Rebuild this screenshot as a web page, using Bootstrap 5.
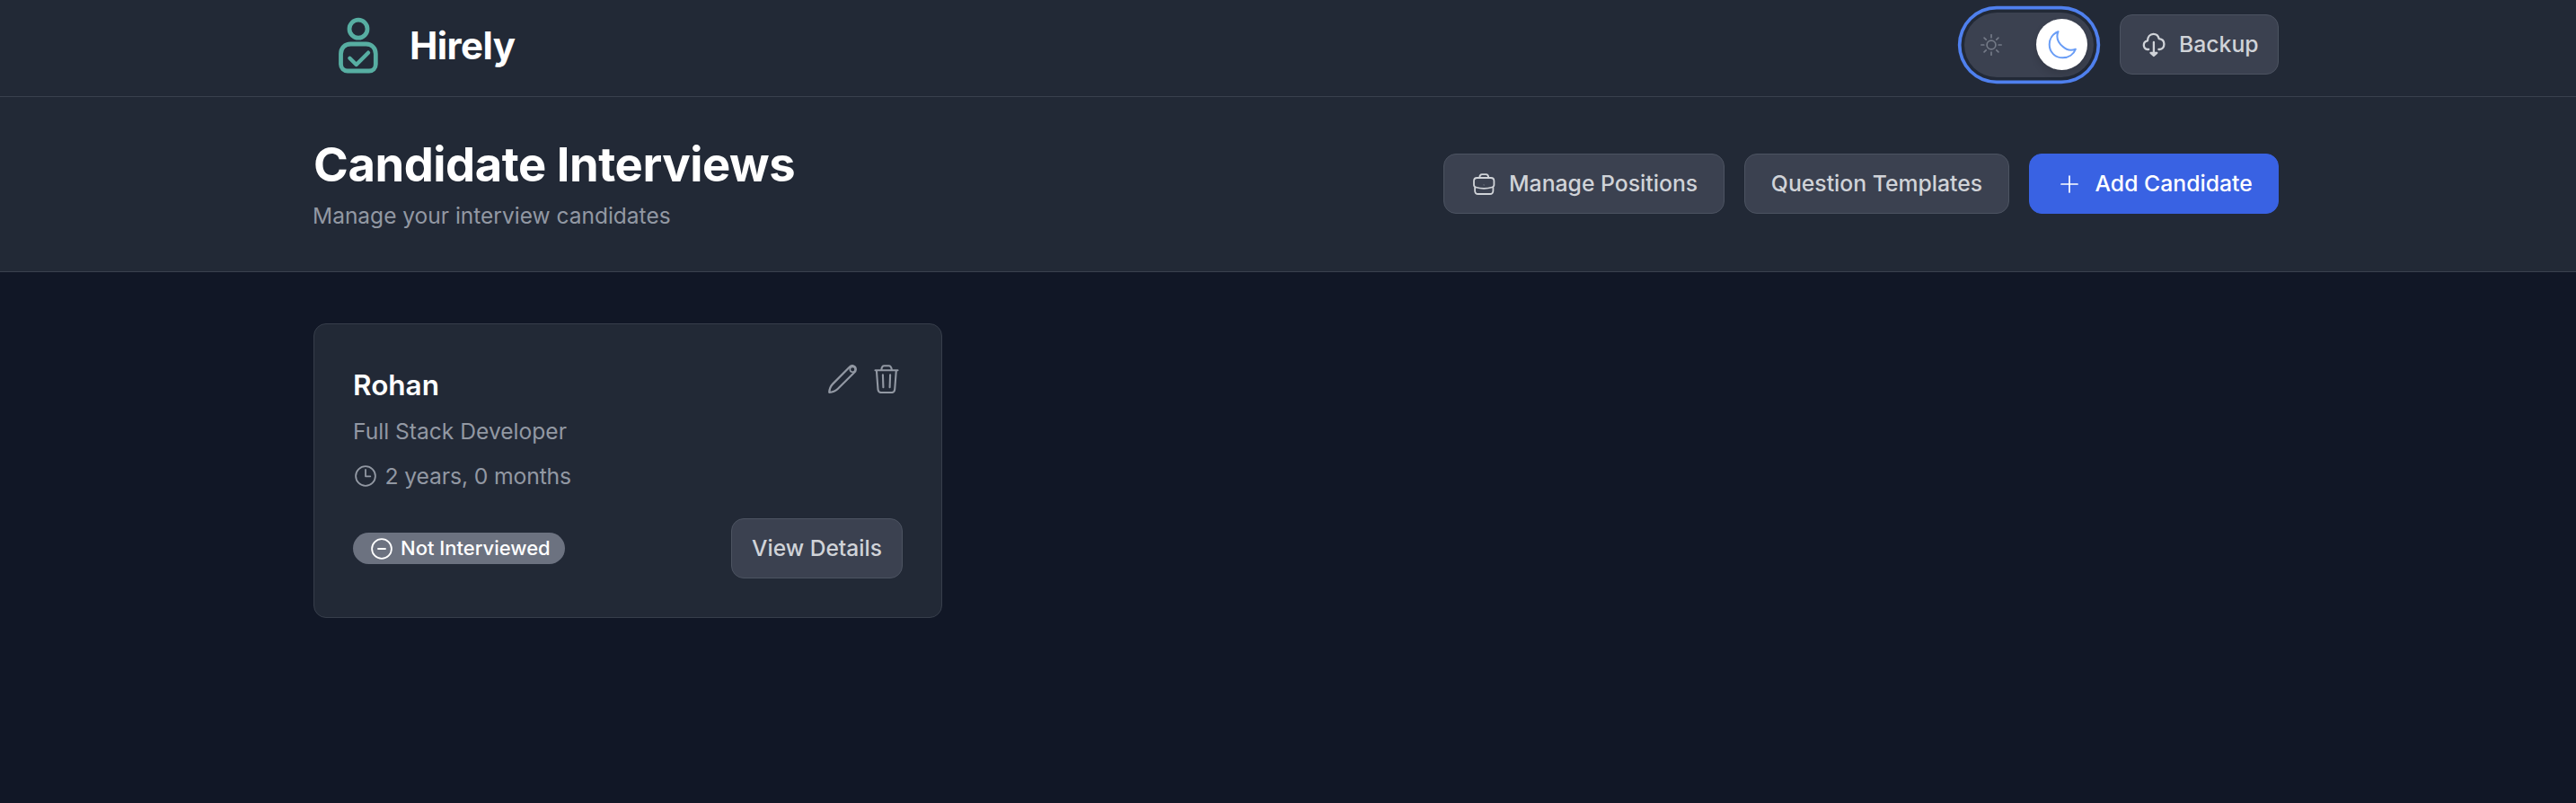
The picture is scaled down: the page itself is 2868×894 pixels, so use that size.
<!DOCTYPE html>
<html lang="en" data-bs-theme="dark">
<head>
<meta charset="utf-8">
<meta name="viewport" content="width=device-width, initial-scale=1">
<title>Hirely</title>
<link rel="stylesheet" href="https://cdn.jsdelivr.net/npm/bootstrap@5.3.0/dist/css/bootstrap.min.css">
<style>
body{background:#111726;color:#fff;font-family:Inter,"Liberation Sans",sans-serif;min-height:100vh;overflow:hidden}
.band{background:#222936;border-bottom:1px solid #3a414e}
.page-x{padding-left:349px;padding-right:331px}
.topbar{height:108px;padding-bottom:8px}
.logo{margin:1px 25px 0 17px;color:#57aea2}
.brand-name{font-size:42px;font-weight:700;letter-spacing:-.6px;line-height:50px;margin:2px 0 0 -1px}
.hero{height:195px;padding-bottom:1px}
.hero h1{font-size:52.5px;font-weight:700;letter-spacing:-.45px;line-height:60px;margin-bottom:10px}
.hero p{font-size:24.5px;line-height:34px;margin-left:-1px}
.soft{color:#9298a3}
.btn{--bs-btn-padding-x:0;--bs-btn-padding-y:0;--bs-btn-border-radius:14px;height:67px;font-size:24.75px;font-weight:500;white-space:nowrap}
.btn-gray{--bs-btn-bg:#3b4150;--bs-btn-color:#d0d3d8;--bs-btn-border-color:#4c5361;--bs-btn-hover-bg:#4c5361;--bs-btn-hover-color:#fff}
.btn-blue{--bs-btn-bg:#3962e3;--bs-btn-color:#fff;--bs-btn-border-color:#3962e3;--bs-btn-hover-bg:#3157ce;--bs-btn-hover-color:#fff}
.actions{gap:22px}
.w-backup{width:177px;padding-left:22.5px;gap:14.500px}
.w-manage{width:313px;padding-left:29.5px;gap:14.5px}
.w-question{width:295px}
.w-add{width:278px;padding-left:29.5px;gap:15px}
.w-view{width:191px;font-size:24.6px}
.theme-toggle{width:144px;height:72px;border:0;padding:0 7px 0 18px;margin-right:7px;background:#3b4150;box-shadow:0 0 0 3.5px #222936,0 0 0 7.2px #4f80ee}
.sun{color:#747a87}
.moon{color:#699df6}
.knob{width:57px;height:57px;background:#fff;box-shadow:0 5px 9px rgba(0,0,0,.12)}
.list-area{padding-top:57px}
.candidate{width:700px;height:328px;padding:43px;background:#222936;border:1px solid #373e4b;border-radius:14px}
.candidate h2{font-size:31.5px;font-weight:600;line-height:38px;margin:6px 0 14px}
.role{font-size:24.6px;line-height:36px;margin-bottom:14px}
.years{font-size:24.75px;line-height:36px;letter-spacing:-.15px;gap:9.500px;padding-left:2px}
.tools{gap:17px;padding:2px 2px 0 0}
.status-pill{height:35px;width:236px;padding-left:20px;gap:9px;background:#6c7280;font-size:22px;font-weight:500;line-height:35px}
svg{flex:none;fill:none;stroke:currentColor;stroke-linecap:round;stroke-linejoin:round}
</style>
<script src="https://cdn.jsdelivr.net/npm/bootstrap@5.3.0/dist/js/bootstrap.bundle.min.js"></script>
</head>
<body>
<header class="band page-x topbar d-flex align-items-center justify-content-between">
  <div class="d-flex align-items-center">
    <svg class="logo" width="66" height="84" viewBox="0 0 66 84" stroke-width="4.800">
      <circle cx="33" cy="24.2" r="10"/>
      <path d="M24.5 41h17C48 41 52.3 45.5 52.3 52v11.500C52.300 68 49 71 45 71H21C17 71 13.500 68 13.500 63.500V52C13.500 45.500 18 41 24.500 41Z"/>
      <path d="M23.400 56.800 30.700 64 44 50.700" stroke-width="4.400"/>
    </svg>
    <span class="brand-name">Hirely</span>
  </div>
  <div class="d-flex align-items-center actions">
    <button class="theme-toggle rounded-pill d-flex align-items-center justify-content-between" aria-label="Toggle theme">
      <svg class="sun" width="24" height="24" viewBox="0 0 24 24" stroke-width="1.700">
        <circle cx="12" cy="12" r="4.900"/>
        <path d="M12 .8v3M12 20.200v3M.8 12h3M20.200 12h3M4.100 4.100l2.100 2.100M17.800 17.800l2.100 2.100M4.100 19.900l2.100-2.100M17.800 6.200l2.100-2.100"/>
      </svg>
      <span class="knob rounded-circle d-flex align-items-center justify-content-center">
        <svg class="moon" width="32" height="32" viewBox="0 0 32 32" stroke-width="2"><path d="M11.500 1.200C5.500 3.500 1.700 9 1.700 15.500 1.700 24 8 30.300 16.500 30.300c6.700 0 12.200-3.800 14.300-9.500-4.300 1.500-9.800 1.300-14.300-3C10.800 13 9 7.500 11.500 1.200Z"/></svg>
      </span>
    </button>
    <button class="btn btn-gray w-backup d-flex align-items-center">
      <svg width="28" height="28" viewBox="0 0 28 28" stroke-width="2.300">
        <path d="M8.200 19H7C4.200 19 2.800 16.500 2.800 14.200c0-2.600 1.700-4.500 4.200-4.900C7.200 5 9.700 1.900 13.500 1.900c3.300 0 5.500 2 6.200 5.200 3.400.3 5.700 2.600 5.700 6 0 3.300-1.800 5.900-5.200 5.900h-.8M13.900 11v14"/>
        <path d="M10.500 22.800h6.800L13.900 26Z" fill="currentColor"/>
      </svg>Backup
    </button>
  </div>
</header>
<section class="band page-x hero d-flex align-items-center justify-content-between">
  <div>
    <h1>Candidate Interviews</h1>
    <p class="soft mb-0">Manage your interview candidates</p>
  </div>
  <div class="d-flex actions">
    <button class="btn btn-gray w-manage d-flex align-items-center">
      <svg width="28" height="28" viewBox="0 0 28 28" stroke-width="1.800">
        <path d="M9.300 6.900c0-2.700 1-3.700 2.700-3.700h4.500c1.700 0 2.700 1 2.700 3.700M6.500 7h15.400c2.300 0 3.500 1.200 3.500 3.500v4.300c0 1.500-.8 2.300-2.200 2.700-6.300 1.800-11.900 1.800-18 0-1.400-.4-2.200-1.200-2.200-2.700v-4.300C3 8.200 4.200 7 6.500 7ZM4.100 17.500v3.700C4.100 23.700 5.200 25 7.700 25h13c2.500 0 3.700-1.300 3.700-3.800v-3.700"/>
        <circle cx="14.200" cy="14.700" r=".1" stroke-width="1.400"/>
      </svg>Manage Positions
    </button>
    <button class="btn btn-gray w-question">Question Templates</button>
    <button class="btn btn-blue w-add d-flex align-items-center">
      <svg width="28" height="28" viewBox="0 0 28 28" stroke-width="1.700"><path d="M14 5v18M5 14h18"/></svg>Add Candidate
    </button>
  </div>
</section>
<main class="page-x list-area">
  <article class="candidate d-flex flex-column justify-content-between">
    <div class="d-flex justify-content-between align-items-start">
      <div>
        <h2>Rohan</h2>
        <div class="role soft">Full Stack Developer</div>
        <div class="years soft d-flex align-items-center">
          <svg width="24" height="24" viewBox="0 0 24 24" stroke-width="1.800"><circle cx="12" cy="12" r="10.900"/><path d="M12 5v7.300h5.300"/></svg>2 years, 0 months
        </div>
      </div>
      <div class="tools soft d-flex">
        <svg width="32" height="32" viewBox="0 0 32 32" stroke-width="2.200"><path d="M1.200 30.800C1.500 27 2.800 23.800 5 21.600L23.700 2.800c1.800-1.800 4.300-2 6-.4 1.700 1.700 1.500 4.300-.4 6.100L10.400 27.200c-2.300 2.200-5.400 3.400-9.200 3.600Z"/><circle cx="27.200" cy="5.300" r="2.900" stroke-width="1.600"/></svg>
        <svg width="32" height="32" viewBox="0 0 32 32" stroke-width="2.100"><path d="M3.500 6.300h25M10.300 6C10.500 2.500 11.500 1.200 13.500 1.200h5c2 0 3 1.300 3.400 4.800M4.900 6.500l1.600 21c.2 2.300 1.300 3.500 3.500 3.500h11.700c2.200 0 3.300-1.200 3.500-3.500l1.600-21M11.900 11.300l.5 13.800M20.100 11.300l-.5 13.800"/></svg>
      </div>
    </div>
    <div class="d-flex align-items-center justify-content-between">
      <span class="status-pill rounded-pill d-flex align-items-center">
        <svg width="24" height="24" viewBox="0 0 24 24" stroke-width="1.800"><circle cx="12" cy="12" r="10.900"/><path d="M8 12h8"/></svg>Not Interviewed
      </span>
      <button class="btn btn-gray w-view">View Details</button>
    </div>
  </article>
</main>
</body>
</html>
